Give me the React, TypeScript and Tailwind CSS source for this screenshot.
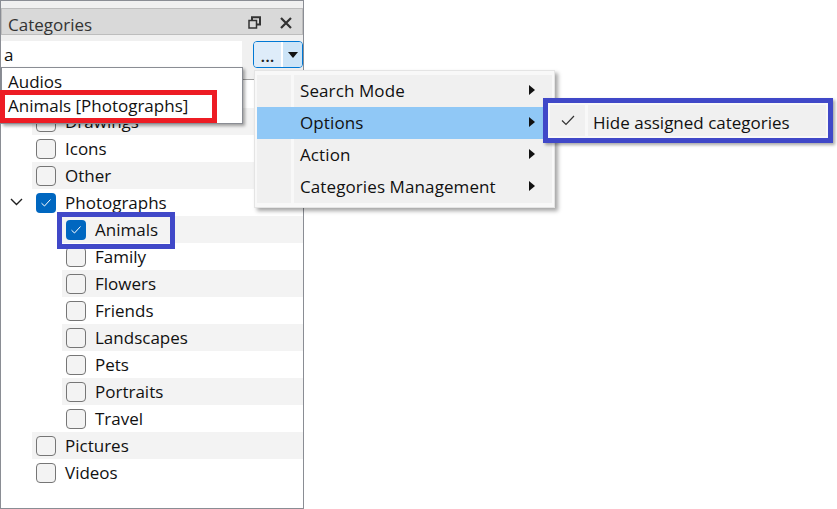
const FONT = "font-['Open_Sans','Noto_Sans',sans-serif]";

type Row = { label: string; depth: number; checked?: boolean; expanded?: boolean };

// the list starts one row higher, behind the autocomplete popup
const ROWS: Row[] = [
  { label: 'Drawings', depth: 0 },
  { label: 'Icons', depth: 0 },
  { label: 'Other', depth: 0 },
  { label: 'Photographs', depth: 0, checked: true, expanded: true },
  { label: 'Animals', depth: 1, checked: true },
  { label: 'Family', depth: 1 },
  { label: 'Flowers', depth: 1 },
  { label: 'Friends', depth: 1 },
  { label: 'Landscapes', depth: 1 },
  { label: 'Pets', depth: 1 },
  { label: 'Portraits', depth: 1 },
  { label: 'Travel', depth: 1 },
  { label: 'Pictures', depth: 0 },
  { label: 'Videos', depth: 0 },
];

const MENU = ['Search Mode', 'Options', 'Action', 'Categories Management'];

function Checkbox({ checked }: { checked?: boolean }) {
  if (checked) {
    return (
      <span className="flex h-5 w-5 shrink-0 items-center justify-center rounded-[4px] bg-[#0067c0]">
        <svg width="12" height="10" viewBox="0 0 12 10" fill="none">
          <path d="M1.5 5.2 4.5 8l6-6.5" stroke="#ffffff" strokeWidth="1" />
        </svg>
      </span>
    );
  }
  return <span className="h-5 w-5 shrink-0 rounded-[4px] border border-[#767676] bg-[#f3f3f3]" />;
}

function TreeRow({ row, shaded }: { row: Row; shaded: boolean }) {
  return (
    <div className={`flex h-[27px] ${row.depth === 1 ? 'pl-[61px]' : 'pl-[31px]'}`}>
      <div className={`relative flex min-w-0 flex-1 items-center gap-[9px] pl-1 ${shaded ? 'bg-[#f3f3f3]' : ''}`}>
        {row.expanded && (
          <svg className="absolute left-[-22px] top-[9px]" width="13" height="8" viewBox="0 0 13 8" fill="none">
            <path d="M1 1 6.5 6.5 12 1" stroke="#202020" strokeWidth="1.4" />
          </svg>
        )}
        <Checkbox checked={row.checked} />
        <span className="text-[17px] leading-none text-[#111]">{row.label}</span>
      </div>
    </div>
  );
}

function MenuItem({ label, active }: { label: string; active: boolean }) {
  return (
    <div className={`relative flex h-[32px] items-center ${active ? 'bg-[#90c8f6]' : ''}`}>
      <span className="w-[37px] shrink-0" />
      <span className="pb-[1px] pl-[6px] text-[17px] leading-none tracking-[0.1px] text-[#111]">{label}</span>
      <svg className="absolute left-[272px] top-[10px]" width="6" height="10" viewBox="0 0 6 10">
        <path d="M0 0l6 5-6 5z" fill="#111" />
      </svg>
    </div>
  );
}

export default function App() {
  return (
    <div className={`relative h-[509px] w-[837px] overflow-hidden bg-white ${FONT}`}>
      <div className="flex h-full w-[304px] flex-col border border-[#8a8d94] bg-[#f0f0f0]">
        <div className="mt-[7px] flex h-[27px] items-center justify-between border border-[#bdbdbd] bg-[#d9d9d9] pl-[6px] pr-[10px] pt-[5px]">
          <span className="text-[17px] leading-none text-[#333]">Categories</span>
          <div className="flex items-center gap-[19px] pb-[3px]">
            <svg width="13" height="13" viewBox="0 0 13 13" fill="none" stroke="#333" strokeWidth="1.5">
              <rect x="1" y="4.5" width="7.5" height="7.5" />
              <path d="M4 4V1.2h8v7.3H9" strokeWidth="2" />
            </svg>
            <svg width="12" height="12" viewBox="0 0 12 12" fill="none" stroke="#333" strokeWidth="2.2">
              <path d="M1 1l10 10M11 1 1 11" />
            </svg>
          </div>
        </div>
        <div className="mt-[6px] flex h-[38px] items-start justify-between">
          <div className="flex h-[26px] w-[241px] items-center bg-white pl-[3px] text-[17px] leading-none text-[#111]">a</div>
          <div className="flex h-[27px] w-[50px] overflow-hidden rounded-[4px] border border-[#0078d4]">
            <div className="flex w-[29px] items-end justify-center border-r-2 border-white bg-[#deecf9] pb-[3px] text-[17px] font-semibold leading-none text-[#222]">...</div>
            <div className="flex flex-1 items-center justify-center bg-[#cce4f7]">
              <svg width="10" height="6" viewBox="0 0 10 6">
                <path d="M0 0h10L5 6z" fill="#111" />
              </svg>
            </div>
          </div>
        </div>
        <div className="flex-1 border-t border-[#a0a0a0] bg-white pt-[28px]">
          {ROWS.map((row, i) => (
            <TreeRow key={row.label} row={row} shaded={i % 2 === 0} />
          ))}
        </div>
      </div>

      {/* autocomplete popup */}
      <div className="absolute left-[1px] top-[67px] h-[57px] w-[242px] border border-[#8a8d94] bg-white px-[6px] pt-[2px] text-[17px] leading-[24px] text-[#111] shadow-[2px_2px_3px_rgba(0,0,0,0.35)]">
        <div>Audios</div>
        <div>Animals [Photographs]</div>
      </div>

      {/* options menu */}
      <div className="absolute left-[254px] top-[70px] w-[301px] border border-[#e4e4e4] bg-[#f8f8f8] px-[2px] py-[4px] shadow-[3px_3px_4px_rgba(0,0,0,0.35)]">
        <div className="relative bg-[#f0f0f0]">
          <span className="absolute bottom-0 left-[34px] top-0 w-[3px] bg-[#f8f8f8]" />
          {MENU.map((label) => (
            <MenuItem key={label} label={label} active={label === 'Options'} />
          ))}
        </div>
      </div>

      {/* submenu */}
      <div className="absolute left-[543px] top-[98px] flex h-[45px] w-[290px] border-[5px] border-[#4048c8] bg-[#f8f8f8] p-[2px] shadow-[2px_2px_3px_rgba(0,0,0,0.35)]">
        <div className="flex w-[35px] items-center justify-center bg-[#f0f0f0]">
          <svg width="14" height="11" viewBox="0 0 14 11" fill="none">
            <path d="M1 5.5 5 9.5 13 1" stroke="#333" strokeWidth="1.2" />
          </svg>
        </div>
        <div className="ml-[3px] flex flex-1 items-center bg-[#f0f0f0] pl-[5px] pt-[3px] text-[17px] leading-none text-[#111]">
          Hide assigned categories
        </div>
      </div>

      {/* annotation frames */}
      <div className="pointer-events-none absolute left-0 top-[90px] h-[33px] w-[217px] border-[5px] border-[#ed1c24]" />
      <div className="pointer-events-none absolute left-[57px] top-[212px] h-[37px] w-[118px] border-[5px] border-[#4048c8]" />
    </div>
  );
}
